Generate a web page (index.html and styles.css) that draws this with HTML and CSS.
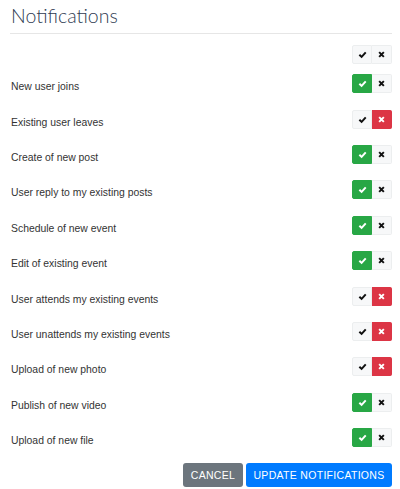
FILE: index.html
```html
<!DOCTYPE html>
<html lang="en">
<head>
    <meta charset="UTF-8">
    <meta name="viewport" content="width=device-width, initial-scale=1.0">
    <title>Notifications</title>
    <link rel="stylesheet" href="styles.css">
</head>
<body>
    <div class="page">
        <h1 class="title">Notifications</h1>

        <!-- header: toggle all -->
        <div class="head-row">
            <div class="toggle">
                <button class="tg tg-on"><svg viewBox="0 0 10 10"><path d="M1.5 5.2 L4 7.6 L8.6 2.6"/></svg></button>
                <button class="tg tg-off"><svg viewBox="0 0 10 10"><path d="M2.4 2.4 L7.6 7.6 M7.6 2.4 L2.4 7.6"/></svg></button>
            </div>
        </div>

        <div class="list" id="list"></div>

        <div class="actions">
            <button class="btn btn-cancel">Cancel</button>
            <button class="btn btn-save">Update notifications</button>
        </div>
    </div>

    <script>
        const items = [
            ['New user joins', true],
            ['Existing user leaves', false],
            ['Create of new post', true],
            ['User reply to my existing posts', true],
            ['Schedule of new event', true],
            ['Edit of existing event', true],
            ['User attends my existing events', false],
            ['User unattends my existing events', false],
            ['Upload of new photo', false],
            ['Publish of new video', true],
            ['Upload of new file', true]
        ];

        const check = '<svg viewBox="0 0 10 10"><path d="M1.5 5.2 L4 7.6 L8.6 2.6"/></svg>';
        const times = '<svg viewBox="0 0 10 10"><path d="M2.4 2.4 L7.6 7.6 M7.6 2.4 L2.4 7.6"/></svg>';
        const list = document.getElementById('list');

        items.forEach(([label, on]) => {
            const row = document.createElement('div');
            row.className = 'row';
            row.innerHTML = `
                <span class="label">${label}</span>
                <div class="toggle">
                    <button class="tg tg-on ${on ? 'yes' : ''}">${check}</button>
                    <button class="tg tg-off ${on ? '' : 'no'}">${times}</button>
                </div>`;
            list.appendChild(row);
        });
    </script>
</body>
</html>
```

FILE: styles.css
```css
body {
    margin: 0;
    background: #fff;
    font-family: "Liberation Sans", Arial, sans-serif;
    color: #333;
}

.page {
    padding: 0 8px 0 10px;
}

.title {
    margin: 0;
    padding: 4px 0 6px 1px;
    font-family: Lato, "Open Sans", sans-serif;
    font-weight: 300;
    font-size: 19.5px;
    line-height: 23px;
    color: #2f3b52;
    border-bottom: 1px solid #e6e6e6;
}

.head-row {
    display: flex;
    justify-content: flex-end;
    align-items: center;
    height: 24px;
    margin-top: 8px;
}

.row {
    display: flex;
    justify-content: space-between;
    align-items: center;
    height: 35.4px;
}

.label {
    font-size: 10.4px;
    padding-left: 1px;
    margin-top: 6px;
    color: #333;
}

.toggle {
    display: flex;
}

.tg {
    width: 20px;
    height: 19px;
    padding: 0;
    border: 1px solid #eceeef;
    background: #f7f8f9;
    display: flex;
    justify-content: center;
    align-items: center;
    cursor: pointer;
}

.tg-on {
    border-radius: 2px 0 0 2px;
}

.tg-off {
    border-radius: 0 2px 2px 0;
    border-left: none;
}

.tg svg {
    width: 9px;
    height: 9px;
    fill: none;
    stroke: #111;
    stroke-width: 2.2;
}

.tg.yes {
    background: #28a745;
    border-color: #28a745;
}

.tg.no {
    background: #dc3545;
    border-color: #dc3545;
}

.tg.yes svg, .tg.no svg {
    stroke: #fff;
}

.actions {
    display: flex;
    justify-content: flex-end;
    gap: 3px;
    margin-top: 8px;
}

.btn {
    height: 24px;
    padding: 0;
    border: none;
    border-radius: 3px;
    color: #fff;
    font-family: "Liberation Sans", Arial, sans-serif;
    font-size: 10.5px;
    letter-spacing: 0.3px;
    text-transform: uppercase;
    white-space: nowrap;
    cursor: pointer;
}

.btn-cancel {
    width: 60px;
    background: #6c757d;
}

.btn-save {
    width: 146px;
    background: #007bff;
}
```
